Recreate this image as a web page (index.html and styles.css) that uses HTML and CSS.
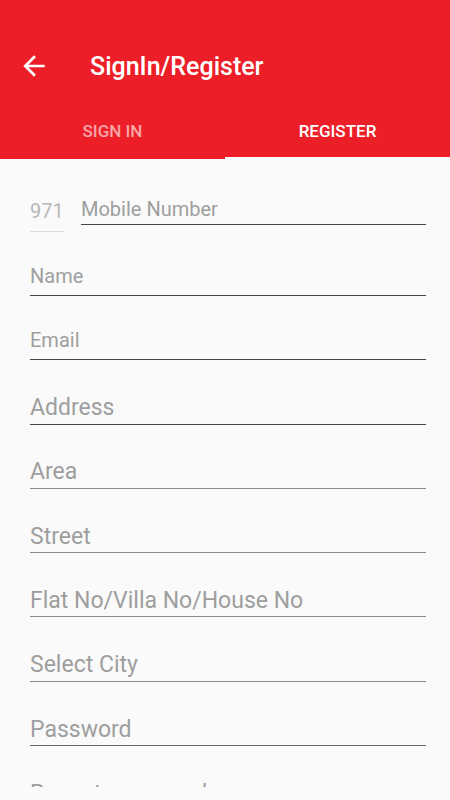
FILE: index.html
```html
<!DOCTYPE html>
<html>
<head>
<meta charset="utf-8">
<link rel="stylesheet" href="styles.css">
</head>
<body>
<div class="screen">
  <header class="appbar">
    <div class="toolbar">
      <svg class="back" viewBox="0 0 24 24" width="32" height="32"><path fill="#fff" d="M20 11H7.83l5.59-5.59L12 4l-8 8 8 8 1.41-1.41L7.83 13H20v-2z"/></svg>
      <h1 class="title">SignIn/Register</h1>
    </div>
    <nav class="tabs">
      <div class="tab">SIGN IN</div>
      <div class="tab active">REGISTER</div>
    </nav>
  </header>
  <main class="form">
    <div class="mobile-row">
      <div class="code">971</div>
      <div class="mobile">Mobile Number</div>
    </div>
    <div class="field small first">Name</div>
    <div class="field small">Email</div>
    <div class="field">Address</div>
    <div class="field light">Area</div>
    <div class="field light">Street</div>
    <div class="field light">Flat No/Villa No/House No</div>
    <div class="field light">Select City</div>
    <div class="field mid">Password</div>
    <div class="field mid">Repeat password</div>
  </main>
</div>
</body>
</html>
```

FILE: styles.css
```css
* { box-sizing: border-box; }
html, body { margin: 0; padding: 0; }
body {
  width: 450px;
  height: 800px;
  overflow: hidden;
  background: #fafafa;
  font-family: Roboto, "Noto Sans", sans-serif;
}
.screen { width: 450px; height: 800px; overflow: hidden; }
.appbar { background: #ec1f28; height: 159px; display: flex; flex-direction: column; }
.toolbar {
  height: 104px;
  padding-top: 30px;
  display: flex;
  align-items: center;
}
.back { margin-left: 18px; width: 32px; height: 32px; margin-top: -2px; }
.title {
  margin: 0 0 0 40px;
  color: #fff;
  font-size: 25px;
  font-weight: 500;
  position: relative;
  top: -1px;
}
.tabs { display: flex; height: 55px; }
.tab {
  flex: 1;
  display: flex;
  align-items: center;
  justify-content: center;
  color: rgba(255,255,255,0.6);
  font-size: 17px;
  font-weight: 500;
  border-bottom: 2px solid transparent;
}
.tab.active { color: #fff; border-bottom-color: #fff; }
.form { height: 628px; overflow: hidden; padding: 38px 24px 0 30px; }
.mobile-row { display: flex; align-items: flex-start; }
.code {
  width: 34px;
  margin-top: 2px;
  font-size: 20px;
  line-height: 24px;
  color: #b8b8b8;
  padding-bottom: 8px;
  border-bottom: 1.5px solid #dcdcdc;
}
.mobile {
  flex: 1;
  margin-left: 17px;
  font-size: 20px;
  line-height: 24px;
  color: #9e9e9e;
  padding-bottom: 3px;
  border-bottom: 1.5px solid #444;
}
.field {
  height: 64.3px;
  display: flex;
  align-items: flex-end;
  font-size: 23px;
  line-height: 28px;
  color: #9e9e9e;
  padding-bottom: 1.5px;
  border-bottom: 1.5px solid #444;
}
.field.first { height: 64px; }
.field.small { font-size: 20px; line-height: 24px; padding-bottom: 7px; }
.field.light { border-bottom-color: #8a8a8a; }
.field.mid { border-bottom-color: #666; }
```
